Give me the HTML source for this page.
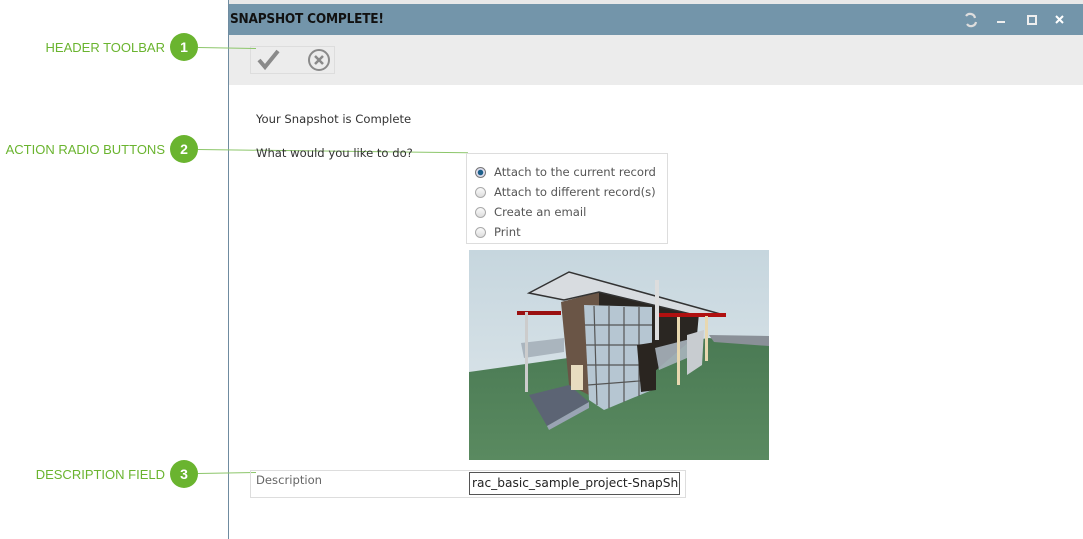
<!DOCTYPE html>
<html><head><meta charset="utf-8"><style>
*{margin:0;padding:0;box-sizing:border-box}
body{width:1083px;height:539px;background:#fff;position:relative;overflow:hidden;font-family:"Liberation Sans",sans-serif}
.lbl{position:absolute;color:#6ab42f;font-size:13px;text-align:right;right:918px;white-space:nowrap}
.num{position:absolute;left:170px;width:28px;height:28px;border-radius:50%;background:#6ab42f;color:#fff;font-weight:bold;font-size:14px;text-align:center;line-height:28px}
.ln{position:absolute;height:1px;background:#8cc66a}
.t{position:absolute;font-size:11.6px;color:#333;font-family:"DejaVu Sans",sans-serif}
.radio{position:absolute;width:11px;height:11px;border-radius:50%;border:1px solid #aaa;background:linear-gradient(#fafafa,#ddd)}
</style></head><body>
<div style="position:absolute;left:228px;top:0;width:855px;height:4px;background:#e8e8e8"></div>
<div style="position:absolute;left:228px;top:4px;width:855px;height:31px;background:#7395aa"></div>
<div style="position:absolute;left:230px;top:11px;font-weight:bold;font-size:13.5px;color:#111;font-family:'DejaVu Sans Condensed','DejaVu Sans',sans-serif;letter-spacing:-.2px">SNAPSHOT COMPLETE!</div>
<svg style="position:absolute;left:960px;top:12px" width="110" height="16">
<path d="M6 4a5 5 0 0 1 9 2M16 10a5 5 0 0 1-9 2" stroke="#ddd" stroke-width="2.2" fill="none"/>
<rect x="37" y="9" width="8" height="2" fill="#eee"/>
<rect x="68" y="4" width="8" height="8" fill="none" stroke="#eee" stroke-width="2"/>
<path d="M96 4l7 7M103 4l-7 7" stroke="#fff" stroke-width="2"/>
</svg>
<div style="position:absolute;left:228px;top:35px;width:855px;height:50px;background:#ececec"></div>
<div style="position:absolute;left:228px;top:0;width:1px;height:539px;background:#6f8ba0"></div>
<div style="position:absolute;left:250px;top:46px;width:85px;height:28px;border:1px solid #ddd"></div>
<svg style="position:absolute;left:256px;top:48px" width="80" height="24">
<path d="M3 12l6 7L22 3" stroke="#8a8a8a" stroke-width="4" fill="none"/>
<circle cx="63" cy="12" r="10" fill="none" stroke="#8a8a8a" stroke-width="2"/>
<path d="M59 8l8 8M67 8l-8 8" stroke="#8a8a8a" stroke-width="2.5"/>
</svg>
<div class="lbl" style="top:40px">HEADER TOOLBAR</div>
<div class="num" style="top:33px">1</div>
<div class="ln" style="left:198px;top:47px;width:58px;transform:rotate(1deg);transform-origin:left"></div>
<div class="lbl" style="top:142px">ACTION RADIO BUTTONS</div>
<div class="num" style="top:135px">2</div>
<div class="ln" style="left:198px;top:149px;width:270px;transform:rotate(0.7deg);transform-origin:left"></div>
<div class="lbl" style="top:467px">DESCRIPTION FIELD</div>
<div class="num" style="top:460px">3</div>
<div class="ln" style="left:198px;top:473px;width:58px;transform:rotate(-1deg);transform-origin:left"></div>
<div class="t" style="left:256px;top:112px">Your Snapshot is Complete</div>
<div class="t" style="left:256px;top:146px">What would you like to do?</div>
<div style="position:absolute;left:466px;top:153px;width:202px;height:91px;border:1px solid #ddd"></div>
<div class="radio" style="left:475px;top:167px;border-color:#777;background:radial-gradient(#1d5f8a 0 2.5px,#dde 3px)"></div>
<div class="radio" style="left:475px;top:187px"></div>
<div class="radio" style="left:475px;top:207px"></div>
<div class="radio" style="left:475px;top:227px"></div>
<div class="t" style="left:494px;top:165px;color:#555">Attach to the current record</div>
<div class="t" style="left:494px;top:185px;color:#555">Attach to different record(s)</div>
<div class="t" style="left:494px;top:205px;color:#555">Create an email</div>
<div class="t" style="left:494px;top:225px;color:#555">Print</div>
<svg style="position:absolute;left:469px;top:250px" width="300" height="210" viewBox="0 0 300 210">
<defs><linearGradient id="s" x1="0" y1="0" x2="0" y2="1"><stop offset="0" stop-color="#c6d6de"/><stop offset="1" stop-color="#e0e8ec"/></linearGradient>
<linearGradient id="g" x1="0" y1="0" x2="0" y2="1"><stop offset="0" stop-color="#4a7a54"/><stop offset="1" stop-color="#5a8a60"/></linearGradient></defs>
<rect width="300" height="210" fill="url(#s)"/>
<polygon points="0,122 240,88 300,95 300,210 0,210" fill="url(#g)"/>
<polygon points="240,85 300,86 300,96 245,92" fill="#8a9098"/>
<polygon points="60,145 100,135 120,152 78,176" fill="#5c6474"/>
<polygon points="78,176 120,152 120,158 80,180" fill="#9aa4b4"/>
<polygon points="130,42 230,63 228,85 185,122 130,120" fill="#2a2622"/>
<polygon points="92,52 130,42 130,150 100,135" fill="#6a5546"/>
<polygon points="115,55 183,57 183,140 135,160 120,150" fill="#b6c6d2"/>
<g stroke="#555" stroke-width="1.2"><line x1="125" y1="56" x2="128" y2="155"/><line x1="140" y1="56" x2="140" y2="158"/><line x1="155" y1="57" x2="155" y2="152"/><line x1="170" y1="57" x2="170" y2="146"/><line x1="116" y1="75" x2="183" y2="75"/><line x1="117" y1="95" x2="183" y2="95"/><line x1="118" y1="115" x2="183" y2="115"/><line x1="119" y1="135" x2="183" y2="130"/></g>
<polygon points="168,95 187,92 187,140 172,142" fill="#2a2520"/>
<polygon points="186,98 225,88 225,105 190,120" fill="#a8b4bc" opacity=".9"/>
<polygon points="60,43 100,22 255,65 230,66 130,42 95,50" fill="#d8dce0" stroke="#333" stroke-width="1.5"/>
<rect x="48" y="61" width="44" height="4" fill="#9a1010"/>
<rect x="190" y="63" width="67" height="4" fill="#b01010"/>
<polygon points="52,93 95,88 95,102 55,108" fill="#a0aab4" opacity=".8"/>
<rect x="56" y="62" width="3" height="80" fill="#ccc"/>
<rect x="186" y="30" width="4" height="60" fill="#ddd"/>
<rect x="208" y="67" width="3" height="68" fill="#e8d8b0"/>
<rect x="236" y="66" width="3" height="45" fill="#e8d8b0"/>
<polygon points="218,85 235,80 233,115 218,125" fill="#c8ccd0"/>
<rect x="102" y="115" width="12" height="25" fill="#e8dcc0"/>
</svg>
<div style="position:absolute;left:250px;top:470px;width:436px;height:28px;border:1px solid #ddd"></div>
<div class="t" style="left:256px;top:473px;color:#666">Description</div>
<div style="position:absolute;left:469px;top:472px;width:211px;height:23px;border:1px solid #555;overflow:hidden;white-space:nowrap;padding:3px 2px;font-size:12.2px;color:#222;font-family:'DejaVu Sans',sans-serif">rac_basic_sample_project-SnapShot</div>
</body></html>
